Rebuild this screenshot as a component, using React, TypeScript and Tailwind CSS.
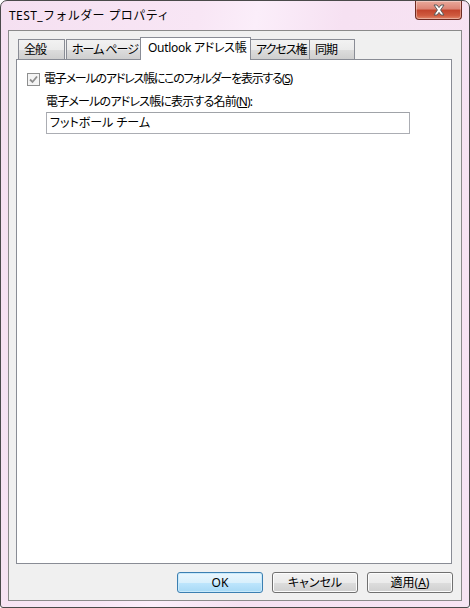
const font = "font-['Noto_Sans','Noto_Sans_CJK_JP',sans-serif] [font-feature-settings:'palt']";

function CloseButton() {
  return (
    <div className="flex h-[19px] w-[47px] items-center justify-center rounded-b-[4px] border border-t-0 border-[#6e2b22] bg-[linear-gradient(to_bottom,#e9a99b_0%,#dc8474_45%,#c2432c_50%,#cf5a3f_80%,#e2866a_100%)] shadow-[inset_0_0_0_1px_rgba(255,255,255,0.35)]">
      <svg width="16" height="12" viewBox="0 0 16 12">
        <path
          d="M3 1 L6 1 L8 3.6 L10 1 L13 1 L9.6 6 L13 11 L10 11 L8 8.4 L6 11 L3 11 L6.4 6 Z"
          fill="#ffffff"
          stroke="#5a5a5a"
          strokeWidth="1"
          strokeLinejoin="round"
        />
      </svg>
    </div>
  );
}

interface TabItem {
  label: string;
  width: string;
  active?: boolean;
}

const tabs: TabItem[] = [
  { label: "全般", width: "w-[47px]" },
  { label: "ホーム ページ", width: "w-[75px]" },
  { label: "Outlook アドレス帳", width: "w-[111px]", active: true },
  { label: "アクセス権", width: "w-[60px]" },
  { label: "同期", width: "w-[46px]" },
];

function Tabs() {
  return (
    <div className="flex h-[22px] items-end pl-[2px]">
      {tabs.map((tab, i) =>
        tab.active ? (
          <div
            key={tab.label}
            className={`relative z-10 -mb-px -ml-px flex h-[23px] ${tab.width} items-start overflow-hidden whitespace-nowrap border border-b-0 border-[#898c95] bg-white pl-[7px] pt-[1px] text-[12px] leading-[18px] tracking-[-0.3px] text-black`}
          >
            {tab.label}
          </div>
        ) : (
          <div
            key={tab.label}
            className={`flex h-[20px] ${tab.width} ${i === 0 ? "" : i === 1 ? "ml-[1px]" : "-ml-px"} items-start overflow-hidden whitespace-nowrap border border-b-0 border-[#898c95] bg-[linear-gradient(to_bottom,#f2f2f2_0%,#ebebeb_50%,#dddddd_51%,#cfcfcf_100%)] pl-[5px] pt-[1px] text-[12px] leading-[18px] tracking-[-1px] text-black`}
          >
            {tab.label}
          </div>
        )
      )}
    </div>
  );
}

function Checkbox() {
  return (
    <div className="flex h-[13px] w-[13px] shrink-0 items-center justify-center border border-[#8e8f8f] bg-[#f4f4f4]">
      <svg width="9" height="9" viewBox="0 0 9 9">
        <path d="M1 4.5 L3.5 7 L8 1.5" fill="none" stroke="#8d8d8d" strokeWidth="1.8" />
      </svg>
    </div>
  );
}

function DialogButton({
  children,
  isDefault,
}: {
  children: React.ReactNode;
  isDefault?: boolean;
}) {
  return (
    <button
      className={`flex h-[21px] w-[86px] items-center justify-center rounded-[3px] border text-[12px] leading-none text-black ${
        isDefault
          ? "border-[#3c7fb1] bg-[linear-gradient(to_bottom,#eaf6fd_0%,#d9f0fc_50%,#bee6fd_51%,#a7d9f5_100%)] shadow-[inset_0_0_0_1px_#c8e9fb]"
          : "border-[#707070] bg-[linear-gradient(to_bottom,#f2f2f2_0%,#ebebeb_50%,#dddddd_51%,#cfcfcf_100%)] shadow-[inset_0_0_0_1px_#fcfcfc]"
      }`}
    >
      {children}
    </button>
  );
}

export default function App() {
  return (
    <div
      className={`${font} flex h-[608px] w-[470px] flex-col rounded-t-[7px] rounded-b-[3px] border border-[#4a4a4a] bg-[linear-gradient(100deg,#f5e0f1_0%,#f8e6f5_35%,#fbeefa_45%,#f6e1f2_60%,#f7e4f3_100%)] px-[7px] pb-[6px]`}
    >
      <div className="flex h-[29px] items-start justify-between">
        <div className="whitespace-nowrap pl-[1px] pt-[6px] text-[12px] leading-[18px] tracking-[0.4px] text-black [font-feature-settings:normal]">
          TEST_フォルダー プロパティ
        </div>
        <CloseButton />
      </div>
      <div className="flex flex-1 flex-col border border-[#8a8a8a] bg-[#f0f0f0] px-[7px] pb-[7px] pt-[6px]">
        <div className="mr-[2px] flex flex-1 flex-col">
          <Tabs />
          <div className="flex-1 border border-[#898c95] bg-white pl-[10px] pt-[12px] text-[12px] text-black">
            <div className="flex items-center gap-[4px] whitespace-nowrap leading-[14px] tracking-[-1.2px]">
              <Checkbox />
              <span>
                電子メールのアドレス帳にこのフォルダーを表示する(<span className="underline">S</span>)
              </span>
            </div>
            <div className="whitespace-nowrap pl-[19px] pt-[9px] leading-[14px] tracking-[-0.8px]">
              電子メールのアドレス帳に表示する名前(<span className="underline">N</span>):
            </div>
            <div className="ml-[19px] mt-[3px] flex h-[22px] w-[364px] items-center border border-[#abadb3] border-t-[#a0a3a8] bg-white pl-[3px] leading-none">
              フットボール チーム
            </div>
          </div>
        </div>
        <div className="mr-[1px] mt-[8px] flex justify-end gap-[9px]">
          <DialogButton isDefault>OK</DialogButton>
          <DialogButton>キャンセル</DialogButton>
          <DialogButton>
            適用(<span className="underline">A</span>)
          </DialogButton>
        </div>
      </div>
    </div>
  );
}
